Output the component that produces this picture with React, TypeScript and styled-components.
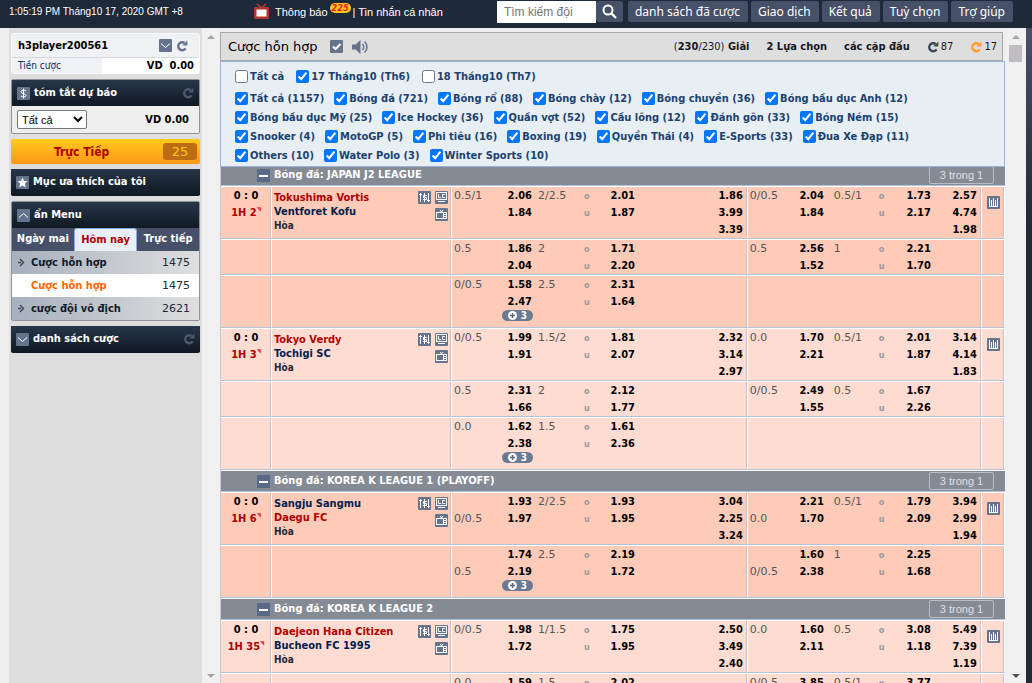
import React from "react";
import styled, { createGlobalStyle, css } from "styled-components";

const condensed = `"DejaVu Sans Condensed", "DejaVu Sans", sans-serif`;
const wide = `"DejaVu Sans", sans-serif`;
const plain = `"Noto Sans", "Open Sans", sans-serif`;
const narrow = `"Liberation Sans", Arial, sans-serif`;

const Global = createGlobalStyle`
  * { box-sizing: border-box; }
  body { margin: 0; background: #eeeeee; font: 11px/16px ${condensed}; color: #000; }
  button, input, select { font: inherit; margin: 0; }
  a { color: inherit; text-decoration: none; }
`;

const Page = styled.div`
  display: flex;
  flex-direction: column;
  height: 100vh;
  overflow: hidden;
`;

/* ---------- top bar ---------- */

const TopBar = styled.header`
  display: flex;
  flex: none;
  height: 28px;
  padding: 1px 19px 5px 9px;
  background: #1e2a3a;
  color: #fff;
  font-family: ${narrow};
`;

const Clock = styled.time`
  width: 245px;
  font-size: 10px;
  line-height: 22px;
  white-space: nowrap;
`;

const Notices = styled.nav`
  display: flex;
  flex: 1;
  gap: 2px;
  line-height: 22px;
  white-space: nowrap;
  svg { margin: 2px 4px 0 0; }
`;

const Count = styled.span`
  align-self: flex-start;
  margin-top: 2px;
  padding: 0 2px;
  border-radius: 5px;
  background: #ffc61a;
  color: #e8202c;
  font: italic bold 9px/10px ${condensed};
`;

const Tools = styled.div`
  display: flex;
  gap: 3px;
`;

const Search = styled.form`
  display: flex;
  margin-right: 2px;
`;

const SearchBox = styled.input`
  width: 99px;
  height: 22px;
  padding: 0 6px;
  border: 1px solid #fff;
  background: #fff;
  font-size: 12px;
  &::placeholder { color: #757575; }
`;

const TopButton = styled.button<{ $icon?: boolean }>`
  display: flex;
  align-items: center;
  justify-content: center;
  height: 21px;
  padding: 0 ${(p) => (p.$icon ? "6px" : "8px 0 7px")};
  border: 0;
  border-radius: 2px;
  background: #465068;
  color: #fff;
  font-family: ${plain};
  font-size: 12px;
  white-space: nowrap;
`;

/* ---------- page columns ---------- */

const Columns = styled.div`
  display: flex;
  flex: 1;
  min-height: 0;
`;

const Sidebar = styled.aside`
  display: flex;
  flex: none;
  flex-direction: column;
  gap: 5px;
  width: 193px;
  margin-left: 9px;
  padding: 5px 2px;
  background: #dedede;
`;

const Main = styled.main`
  flex: 1;
  min-width: 0;
  padding-top: 4px;
  overflow: hidden;
`;

const ScrollTrack = styled.div<{ $width: number }>`
  display: flex;
  flex: none;
  flex-direction: column;
  align-items: center;
  width: ${(p) => p.$width}px;
  padding: 7px 0 5px;
  background: #f0f0f0;
`;

const Thumb = styled.div`
  width: 13px;
  height: 17px;
  margin-top: 6px;
  background: #bfbcc2;
`;

const Arrow = styled.i<{ $down?: boolean; $dark?: boolean }>`
  border: 4px solid transparent;
  ${(p) =>
    p.$down
      ? css`
          margin-top: auto;
          border-bottom: 0;
          border-top-color: ${p.$dark ? "#505050" : "#a3a3a3"};
        `
      : css`
          border-top: 0;
          border-bottom-color: #a3a3a3;
        `}
`;

const RightEdge = styled.div`
  flex: none;
  width: 6px;
  background: linear-gradient(#465068, #1e2a3a 200px);
`;

/* ---------- sidebar ---------- */

const UserBox = styled.section`
  border: 1px solid #fafafa;
  border-radius: 3px;
  background: #f0f1f4;
`;

const UserName = styled.div`
  display: flex;
  align-items: center;
  gap: 4px;
  height: 24px;
  padding: 0 11px 0 6px;
  border-bottom: 1px solid #d6d9e0;
  font-weight: bold;
  b { flex: 1; }
`;

const Balance = styled.div`
  display: flex;
  justify-content: space-between;
  height: 15px;
  padding: 0 5px 0 6px;
  background: linear-gradient(90deg, #f0f1f4 90px, #fff 90px);
  color: #0c2c5c;
  font: 10px/15px ${condensed};
  b { color: #000; font-size: 11px; white-space: pre; }
`;

const Panel = styled.section<{ $bordered?: boolean }>`
  border-radius: 2px;
  ${(p) =>
    p.$bordered
      ? css`
          border: 1px solid #8f9399;
          background: #eeeeee;
        `
      : css`
          padding-bottom: 1px;
          background: #101923;
        `}
`;

const PanelHead = styled.h2`
  display: flex;
  align-items: center;
  gap: 4px;
  height: 26px;
  margin: 0;
  padding: 0 5px;
  background: linear-gradient(#28364a, #101923);
  color: #fff;
  font-size: 11px;
  font-weight: bold;
  span { flex: 1; }
`;

const Forecast = styled.div`
  display: flex;
  align-items: center;
  justify-content: space-between;
  height: 27px;
  padding: 0 10px 0 5px;
  font-weight: bold;
`;

const Choice = styled.select`
  width: 70px;
  height: 19px;
  border: 1px solid #767676;
  border-radius: 2px;
  background-color: #fff;
  font-family: ${narrow};
  font-weight: normal;
`;

const LiveButton = styled.button`
  display: flex;
  align-items: center;
  height: 25px;
  padding: 0 3px 0 43px;
  border: 0;
  border-radius: 2px;
  background: linear-gradient(#ffcb1c, #ff9618);
  color: #b00000;
  font-size: 12px;
  font-weight: bold;
  text-align: left;
  span { flex: 1; }
  em {
    width: 34px;
    border-radius: 3px;
    background: #bf6b14;
    color: #ffc61a;
    font: 13px/17px ${wide};
    text-align: center;
  }
`;

const Tabs = styled.nav`
  display: flex;
  height: 23px;
  background: #465068;
`;

const Tab = styled.a<{ $active?: boolean }>`
  flex: 1 1 0;
  border-radius: 3px 3px 0 0;
  color: ${(p) => (p.$active ? "#b00000" : "#fff")};
  font-weight: bold;
  line-height: 22px;
  text-align: center;
  ${(p) =>
    p.$active &&
    css`
      border: 1px solid #7fb0ea;
      border-bottom: 0;
      background: #e9eff5;
    `}
`;

const MenuItem = styled.a<{ $current?: boolean }>`
  display: flex;
  align-items: center;
  gap: 5px;
  height: 23px;
  padding: 0 9px 0 5px;
  background: ${(p) => (p.$current ? "#fff" : "linear-gradient(90deg, #a7b0be, #dedede)")};
  color: ${(p) => (p.$current ? "#ff6600" : "#111a26")};
  font-weight: bold;
  span { flex: 1; }
  em { color: #222a38; font: 11px/16px ${wide}; }
`;

/* ---------- title bar and filters ---------- */

const TitleBar = styled.div`
  display: flex;
  align-items: center;
  height: 29px;
  margin-right: 2px;
  padding: 0 5px 0 7px;
  border: 1px solid #a8a8a8;
  background: #dedede;
  color: #141a24;
  white-space: nowrap;
`;

const Title = styled.h1`
  margin: 0 12px 0 0;
  color: #000;
  font: 13px/20px ${wide};
`;

const TitleLinks = styled.div`
  display: flex;
  flex: 1;
  justify-content: flex-end;
  gap: 17px;
  a { font-weight: bold; }
  i { font-style: normal; font-weight: normal; }
`;

const Refresh = styled.button`
  display: flex;
  align-items: center;
  gap: 2px;
  padding: 0;
  border: 0;
  background: none;
  color: #141a24;
`;

const IconButton = styled.button`
  display: flex;
  margin-right: 9px;
  padding: 0;
  border: 0;
  background: none;
`;

const Filters = styled.form`
  position: relative;
  z-index: 1;
  height: 106px;
  padding: 5px 14px 0;
  border: 1px solid #9ab3da;
  background: #e7eef4;
`;

const FilterRow = styled.div<{ $dates?: boolean }>`
  display: flex;
  gap: ${(p) => (p.$dates ? 12 : 10)}px;
  height: 19px;
  margin-bottom: ${(p) => (p.$dates ? 3 : 0)}px;
`;

const Check = styled.label`
  display: flex;
  align-items: center;
  gap: 2px;
  color: #1b426f;
  font-weight: bold;
  white-space: nowrap;
  input { width: 13px; height: 13px; accent-color: #0075ff; }
`;

/* ---------- odds table ---------- */

const Odds = styled.table`
  width: 100%;
  margin-top: -3px;
  border-left: 1px solid #c3c9d6;
  border-spacing: 0;
  table-layout: fixed;
  td, th { padding: 0; vertical-align: top; }
`;

const League = styled.th`
  height: 22px;
  border-top: 1px solid #fff;
  border-bottom: 1px solid #b5c3d8;
  background: #858b95;
  color: #fff;
  font-weight: bold;
  text-align: left;
`;

const LeagueLine = styled.div`
  display: flex;
  align-items: center;
  gap: 4px;
  height: 20px;
  padding: 0 11px 0 36px;
  span { flex: 1; }
`;

const Parlay = styled.button`
  width: 65px;
  height: 18px;
  padding: 0;
  border: 1px solid #b9bdc4;
  border-radius: 2px;
  background: none;
  color: #dde0e4;
  font-family: ${narrow};
  font-weight: normal;
`;

const Row = styled.tr<{ $pale: boolean; $height: number }>`
  height: ${(p) => p.$height}px;
  background: ${(p) => (p.$pale ? "#ffdcd1" : "#ffcbb9")};
`;

const Cell = styled.td<{ $end?: boolean; $align?: string }>`
  border-top: 1px solid #fff;
  border-bottom: 1px solid #b5c3d8;
  line-height: 18px;
  font-weight: bold;
  text-align: ${(p) => p.$align || "left"};
  white-space: nowrap;
  ${(p) =>
    p.$end &&
    css`
      border-right: 1px solid #fff;
      box-shadow: inset -1px 0 #c9bfc8;
    `}
`;

const Score = styled.div<{ $live?: boolean }>`
  height: 17px;
  color: ${(p) => (p.$live ? "#b00000" : "#000")};
  sup { color: #e83848; font-size: 6px; line-height: 6px; }
`;

const Match = styled.div`
  display: flex;
  justify-content: space-between;
  padding: 4px 3px 0 2px;
`;

const Team = styled.a<{ $red?: boolean; $draw?: boolean }>`
  display: block;
  color: ${(p) => (p.$red ? "#b00000" : p.$draw ? "#222a38" : "#00204f")};
  font-size: ${(p) => (p.$draw ? 10 : 11)}px;
  line-height: 14px;
`;

const MatchIcons = styled.div`
  display: grid;
  grid-template-columns: 13px 13px;
  gap: 4px;
  align-content: start;
  svg:last-child { grid-column: 2; }
`;

const Line = styled.span<{ $kind: "hdp" | "price" | "side"; $indent?: boolean }>`
  display: block;
  height: 17px;
  ${(p) =>
    p.$kind === "hdp"
      ? css`
          padding-left: ${p.$indent ? 6 : 2}px;
          color: #555;
          font: 11px/17px ${wide};
        `
      : p.$kind === "side"
        ? css`
            padding-left: 1px;
            color: #999;
            font-size: 9px;
          `
        : css`
            padding-right: 4px;
          `}
`;

const More = styled.button`
  display: flex;
  align-items: center;
  justify-content: center;
  gap: 4px;
  width: 31px;
  height: 11px;
  margin: 0 3px 0 auto;
  padding: 0;
  border: 0;
  border-radius: 6px;
  background: #6b7a93;
  color: #fff;
  font-size: 10px;
  font-weight: bold;
  line-height: 11px;
`;

const StatsButton = styled(IconButton)`
  margin: 9px 0 0 5px;
`;

/* ---------- icons ---------- */

const slate = "#65738d";

const Tile = ({ children }: { children?: React.ReactNode }) => (
  <svg width="13" height="13" viewBox="0 0 13 13" fill="none" stroke="#fff" aria-hidden="true">
    <rect width="13" height="13" rx="1" fill={slate} stroke="none" />
    {children}
  </svg>
);

const Chevron = ({ up }: { up?: boolean }) => (
  <Tile>
    <path d={up ? "M2 8.5 6.5 4.5 11 8.5" : "M2 4.5 6.5 8.5 11 4.5"} />
  </Tile>
);

const Reload = ({ color = slate }: { color?: string }) => (
  <svg width="12" height="12" viewBox="0 0 12 12" fill="none" aria-hidden="true">
    <path d="M8.6 3A4 4 0 1 0 9.6 8.4" stroke={color} strokeWidth="2.4" />
    <path d="M6.4 5.6h5V.6z" fill={color} />
  </svg>
);

const Tv = () => (
  <svg width="15" height="16" viewBox="0 0 15 16" aria-hidden="true">
    <path d="M3 1 7.5 5 12 1" fill="none" stroke="#c0392b" strokeWidth="1.6" />
    <rect y="4" width="15" height="12" rx="1" fill="#b5352c" />
    <rect x="2.500" y="6.500" width="10" height="7" fill="#fff" />
  </svg>
);

const Magnifier = () => (
  <svg width="15" height="15" viewBox="0 0 15 15" fill="none" stroke="#fff" aria-hidden="true">
    <circle cx="6" cy="6" r="4.500" strokeWidth="2" />
    <path d="m9 9 5 5" strokeWidth="2.4" />
  </svg>
);

const Speaker = () => (
  <svg width="16" height="14" viewBox="0 0 16 14" fill="none" aria-hidden="true">
    <path d="M0 4.500h3.500L8.500 0v14L3.500 9.500H0z" fill={slate} />
    <path d="M10.500 4c1.600 1.600 1.600 4.400 0 6M12.500 1.500c3.300 3 3.300 8 0 11" stroke={slate} strokeWidth="1.500" />
  </svg>
);

const Swap = () => (
  <Tile>
    <path d="M2.500 11V2M1 3.500h3M10.500 2v9M9 9.500h3" />
    <path d="M9 4.500H5.500v2h3v2H5M6.500 2v9" />
  </Tile>
);

const LiveCentre = () => (
  <Tile>
    <rect x="1.500" y="1.500" width="10" height="7" />
    <path d="M3.500 3v3.500H6M10 3.500H7.500v3H10M3 10.500h7" />
  </Tile>
);

const Television = () => (
  <Tile>
    <rect x="1.500" y="4.500" width="10" height="6" />
    <path d="M5 2l1.500 2L8 2M8.500 5v6M9 6.500h2M9 8.500h2" />
  </Tile>
);

const Bars = () => (
  <Tile>
    <path d="M2.500 2v8M4.500 4v6M6.500 2v8M8.500 4v6M10.500 2v8M2 10.500h9" />
  </Tile>
);

const Collapse = () => (
  <svg width="13" height="13" viewBox="0 0 13 13" aria-hidden="true">
    <rect width="13" height="13" fill="#596988" />
    <rect x="2" y="6" width="9" height="2" fill="#fff" />
  </svg>
);

const Plus = () => (
  <svg width="9" height="9" viewBox="0 0 9 9" aria-hidden="true">
    <circle cx="4.500" cy="4.500" r="4.500" fill="#fff" />
    <path d="M4.500 2v5M2 4.500h5" stroke="#56657f" strokeWidth="1.400" />
  </svg>
);

const Pointer = () => (
  <svg width="9" height="9" viewBox="0 0 9 9" fill="none" stroke="#3a4456" aria-hidden="true">
    <path d="M1 4.500h3M3 1l3.500 3.500L3 8" strokeWidth="1.400" />
  </svg>
);

/* ---------- data ---------- */

type Half = { hdp: string[]; price: string[]; ou?: string; total?: string[]; x12?: string[] };
type OddsRow = { full: Half; half?: Half; more?: boolean };
type Fixture = { minute: string; home: string; away: string; fav: "home" | "away"; pale: boolean; rows: OddsRow[] };

const leagues: { name: string; fixtures: Fixture[] }[] = [
  {
    name: "Bóng đá: JAPAN J2 LEAGUE",
    fixtures: [
      {
        minute: "1H 2", home: "Tokushima Vortis", away: "Ventforet Kofu", fav: "home", pale: false,
        rows: [
          {
            full: { hdp: ["0.5/1"], price: ["2.06", "1.84"], ou: "2/2.5", total: ["2.01", "1.87"], x12: ["1.86", "3.99", "3.39"] },
            half: { hdp: ["0/0.5"], price: ["2.04", "1.84"], ou: "0.5/1", total: ["1.73", "2.17"], x12: ["2.57", "4.74", "1.98"] },
          },
          {
            full: { hdp: ["0.5"], price: ["1.86", "2.04"], ou: "2", total: ["1.71", "2.20"] },
            half: { hdp: ["0.5"], price: ["2.56", "1.52"], ou: "1", total: ["2.21", "1.70"] },
          },
          { full: { hdp: ["0/0.5"], price: ["1.58", "2.47"], ou: "2.5", total: ["2.31", "1.64"] }, more: true },
        ],
      },
      {
        minute: "1H 3", home: "Tokyo Verdy", away: "Tochigi SC", fav: "home", pale: true,
        rows: [
          {
            full: { hdp: ["0/0.5"], price: ["1.99", "1.91"], ou: "1.5/2", total: ["1.81", "2.07"], x12: ["2.32", "3.14", "2.97"] },
            half: { hdp: ["0.0"], price: ["1.70", "2.21"], ou: "0.5/1", total: ["2.01", "1.87"], x12: ["3.14", "4.14", "1.83"] },
          },
          {
            full: { hdp: ["0.5"], price: ["2.31", "1.66"], ou: "2", total: ["2.12", "1.77"] },
            half: { hdp: ["0/0.5"], price: ["2.49", "1.55"], ou: "0.5", total: ["1.67", "2.26"] },
          },
          { full: { hdp: ["0.0"], price: ["1.62", "2.38"], ou: "1.5", total: ["1.61", "2.36"] }, more: true },
        ],
      },
    ],
  },
  {
    name: "Bóng đá: KOREA K LEAGUE 1 (PLAYOFF)",
    fixtures: [
      {
        minute: "1H 6", home: "Sangju Sangmu", away: "Daegu FC", fav: "away", pale: false,
        rows: [
          {
            full: { hdp: ["", "0/0.5"], price: ["1.93", "1.97"], ou: "2/2.5", total: ["1.93", "1.95"], x12: ["3.04", "2.25", "3.24"] },
            half: { hdp: ["", "0.0"], price: ["2.21", "1.70"], ou: "0.5/1", total: ["1.79", "2.09"], x12: ["3.94", "2.99", "1.94"] },
          },
          {
            full: { hdp: ["", "0.5"], price: ["1.74", "2.19"], ou: "2.5", total: ["2.19", "1.72"] },
            half: { hdp: ["", "0/0.5"], price: ["1.60", "2.38"], ou: "1", total: ["2.25", "1.68"] },
            more: true,
          },
        ],
      },
    ],
  },
  {
    name: "Bóng đá: KOREA K LEAGUE 2",
    fixtures: [
      {
        minute: "1H 35", home: "Daejeon Hana Citizen", away: "Bucheon FC 1995", fav: "home", pale: true,
        rows: [
          {
            full: { hdp: ["0/0.5"], price: ["1.98", "1.72"], ou: "1/1.5", total: ["1.75", "1.95"], x12: ["2.50", "3.49", "2.40"] },
            half: { hdp: ["0.0"], price: ["1.60", "2.11"], ou: "0.5", total: ["3.08", "1.18"], x12: ["5.49", "7.39", "1.19"] },
          },
          {
            full: { hdp: ["0.0"], price: ["1.59"], ou: "1.5", total: ["2.02"] },
            half: { hdp: ["0/0.5"], price: ["3.85"], ou: "0.5/1", total: ["3.77"] },
          },
        ],
      },
    ],
  },
];

const dates: [string, boolean][] = [["Tất cả", false], ["17 Tháng10 (Th6)", true], ["18 Tháng10 (Th7)", false]];

const sports = [
  ["Tất cả (1157)", "Bóng đá (721)", "Bóng rổ (88)", "Bóng chày (12)", "Bóng chuyền (36)", "Bóng bầu dục Anh (12)"],
  ["Bóng bầu dục Mỹ (25)", "Ice Hockey (36)", "Quần vợt (52)", "Cầu lông (12)", "Đánh gôn (33)", "Bóng Ném (15)"],
  ["Snooker (4)", "MotoGP (5)", "Phi tiêu (16)", "Boxing (19)", "Quyền Thái (4)", "E-Sports (33)", "Đua Xe Đạp (11)"],
  ["Others (10)", "Water Polo (3)", "Winter Sports (10)"],
];

/* 0 marks the column that takes the remaining width */
const columnWidths = [51, 180, 48, 36, 47, 16, 40, 0, 43, 37, 50, 16, 41, 47, 23];

/* ---------- parts ---------- */

const Lines = ({ kind, values = [] }: { kind: "hdp" | "price" | "side"; values?: string[] }) => (
  <>
    {values.map((v, i) => (
      <Line key={i} $kind={kind}>{v}</Line>
    ))}
  </>
);

const HalfCells = ({ data, more, firstHalf }: { data?: Half; more?: boolean; firstHalf?: boolean }) => (
  <>
    <Cell><Lines kind="hdp" values={data?.hdp} /></Cell>
    <Cell $align="right">
      <Lines kind="price" values={data?.price} />
      {more && <More type="button"><Plus />3</More>}
    </Cell>
    <Cell>{data?.ou && <Line $kind="hdp" $indent={firstHalf}>{data.ou}</Line>}</Cell>
    <Cell><Lines kind="side" values={data ? ["o", "u"] : []} /></Cell>
    <Cell $align="right"><Lines kind="price" values={data?.total} /></Cell>
    <Cell $align="right" $end><Lines kind="price" values={data?.x12} /></Cell>
  </>
);

const FixtureRows = ({ f }: { f: Fixture }) => (
  <>
    {f.rows.map((r, i) => (
      <Row key={i} $pale={f.pale} $height={i === 0 || r.more ? 53 : 36}>
        <Cell $end $align="center">
          {i === 0 && (
            <>
              <Score>0 : 0</Score>
              <Score $live>{f.minute}<sup>◥</sup></Score>
            </>
          )}
        </Cell>
        <Cell $end>
          {i === 0 && (
            <Match>
              <div>
                <Team href="#" $red={f.fav === "home"}>{f.home}</Team>
                <Team href="#" $red={f.fav === "away"}>{f.away}</Team>
                <Team as="span" $draw>Hòa</Team>
              </div>
              <MatchIcons><Swap /><LiveCentre /><Television /></MatchIcons>
            </Match>
          )}
        </Cell>
        <HalfCells data={r.full} more={r.more} />
        <HalfCells data={r.half} firstHalf />
        <Cell $end>
          {i === 0 && <StatsButton type="button" aria-label="Thống kê"><Bars /></StatsButton>}
        </Cell>
      </Row>
    ))}
  </>
);

export default function App() {
  return (
    <Page>
      <Global />
      <TopBar>
        <Clock>1:05:19 PM Tháng10 17, 2020 GMT +8</Clock>
        <Notices>
          <Tv />
          <a href="#">Thông báo</a>
          <Count>225</Count>
          <span>| <a href="#">Tin nhắn cá nhân</a></span>
        </Notices>
        <Tools>
          <Search>
            <SearchBox aria-label="Tìm kiếm đội" placeholder="Tìm kiếm đội" />
            <TopButton type="button" aria-label="Tìm" $icon><Magnifier /></TopButton>
          </Search>
          {["danh sách đã cược", "Giao dịch", "Kết quả", "Tuỳ chọn", "Trợ giúp"].map((t) => (
            <TopButton key={t} type="button">{t}</TopButton>
          ))}
        </Tools>
      </TopBar>

      <Columns>
        <Sidebar>
          <UserBox>
            <UserName><b>h3player200561</b><Chevron /><Reload /></UserName>
            <Balance><span>Tiền cược</span><b>VD  0.00</b></Balance>
          </UserBox>

          <Panel $bordered>
            <PanelHead>
              <Tile>
                <path d="M9 4C8 2.700 4 2.600 4 4.700S9 6.500 9 8.500 5 10.300 4 9M6.500 1.500v10" />
              </Tile>
              <span>tóm tắt dự báo</span>
              <Reload color="#4a5970" />
            </PanelHead>
            <Forecast>
              <Choice aria-label="tóm tắt dự báo" defaultValue="all">
                <option value="all">Tất cả</option>
              </Choice>
              <span>VD 0.00</span>
            </Forecast>
          </Panel>

          <LiveButton type="button"><span>Trực Tiếp</span><em>25</em></LiveButton>

          <Panel>
            <PanelHead>
              <Tile>
                <path d="m6.500 1.500 1.500 3.300 3.500.4-2.600 2.400.7 3.600-3.100-1.800-3.100 1.800.7-3.600L1.500 5.200l3.500-.4z" fill="#fff" stroke="none" />
              </Tile>
              <span>Mục ưa thích của tôi</span>
            </PanelHead>
          </Panel>

          <Panel $bordered>
            <PanelHead><Chevron up /><span>ẩn Menu</span></PanelHead>
            <Tabs>
              <Tab href="#">Ngày mai</Tab>
              <Tab href="#" $active>Hôm nay</Tab>
              <Tab href="#">Trực tiếp</Tab>
            </Tabs>
            <MenuItem href="#"><Pointer /><span>Cược hỗn hợp</span><em>1475</em></MenuItem>
            <MenuItem href="#" $current><svg width="9" height="9" aria-hidden="true" /><span>Cược hỗn hợp</span><em>1475</em></MenuItem>
            <MenuItem href="#"><Pointer /><span>cược đội vô địch</span><em>2621</em></MenuItem>
          </Panel>

          <Panel>
            <PanelHead><Chevron /><span>danh sách cược</span><Reload color="#4a5970" /></PanelHead>
          </Panel>
        </Sidebar>

        <ScrollTrack $width={18}><Arrow /><Arrow $down /></ScrollTrack>

        <Main>
          <TitleBar>
            <Title>Cược hỗn hợp</Title>
            <IconButton type="button" aria-label="Chọn giải">
              <Tile><path d="m3 6.500 2.500 2.500L10.500 4" strokeWidth="2" /></Tile>
            </IconButton>
            <IconButton type="button" aria-label="Âm thanh"><Speaker /></IconButton>
            <TitleLinks>
              <a href="#"><i>(</i>230<i>/230)</i> Giải</a>
              <a href="#">2 Lựa chọn</a>
              <a href="#">các cặp đấu</a>
              <Refresh type="button"><Reload color="#3a4658" />87</Refresh>
              <Refresh type="button"><Reload color="#ff9c2a" />17</Refresh>
            </TitleLinks>
          </TitleBar>

          <Filters>
            <FilterRow $dates>
              {dates.map(([t, on]) => (
                <Check key={t}><input type="checkbox" defaultChecked={on} />{t}</Check>
              ))}
            </FilterRow>
            {sports.map((row, i) => (
              <FilterRow key={i}>
                {row.map((t) => (
                  <Check key={t}><input type="checkbox" defaultChecked />{t}</Check>
                ))}
              </FilterRow>
            ))}
          </Filters>

          <Odds>
            <colgroup>
              {columnWidths.map((w, i) => <col key={i} style={w ? { width: w } : undefined} />)}
            </colgroup>
            {leagues.map((l) => (
              <tbody key={l.name}>
                <tr>
                  <League colSpan={15} scope="rowgroup">
                    <LeagueLine>
                      <Collapse />
                      <span>{l.name}</span>
                      <Parlay type="button">3 trong 1</Parlay>
                    </LeagueLine>
                  </League>
                </tr>
                {l.fixtures.map((f) => <FixtureRows key={f.home} f={f} />)}
              </tbody>
            ))}
          </Odds>
        </Main>

        <ScrollTrack $width={21}><Arrow /><Thumb /><Arrow $down $dark /></ScrollTrack>
        <RightEdge />
      </Columns>
    </Page>
  );
}
